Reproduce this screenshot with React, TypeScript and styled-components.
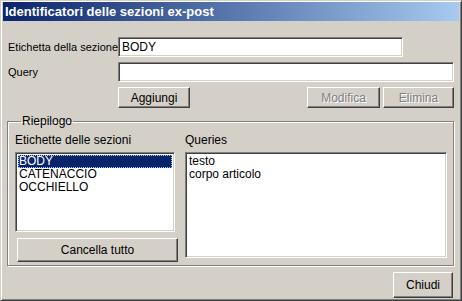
import styled, { createGlobalStyle } from 'styled-components';

const GlobalStyle = createGlobalStyle`
  html, body {
    margin: 0;
    padding: 0;
    background: #d4d0c8;
  }
  body {
    font-family: "Liberation Sans", Arial, sans-serif;
    font-size: 11px;
    color: #000;
  }
`;

const sezioni = ['BODY', 'CATENACCIO', 'OCCHIELLO'];
const queries = ['testo', 'corpo articolo'];

export default function App() {
  return (
    <>
      <GlobalStyle />
      <Window>
        <TitleBar>Identificatori delle sezioni ex-post</TitleBar>
        <Body>
          <FieldRow>
            <FieldLabel>Etichetta della sezione</FieldLabel>
            <TextField $width={285} defaultValue="BODY" />
          </FieldRow>
          <FieldRow>
            <FieldLabel>Query</FieldLabel>
            <TextField $width={336} defaultValue="" />
          </FieldRow>
          <ButtonRow>
            <Button $width={72}>Aggiungi</Button>
            <Spacer />
            <Button $width={73} disabled>
              Modifica
            </Button>
            <Button $width={71} disabled>
              Elimina
            </Button>
          </ButtonRow>
          <GroupBox>
            <Legend>Riepilogo</Legend>
            <GroupColumns>
              <Column $width={163}>
                <ColumnLabel>Etichette delle sezioni</ColumnLabel>
                <ListBox $height={80} $width={160}>
                  {sezioni.map((s, i) => (
                    <ListItem key={s} $selected={i === 0}>
                      {s}
                    </ListItem>
                  ))}
                </ListBox>
                <WideButton $width={161} $height={24}>
                  Cancella tutto
                </WideButton>
              </Column>
              <Column>
                <ColumnLabel>Queries</ColumnLabel>
                <ListBox $height={106}>
                  {queries.map((q) => (
                    <ListItem key={q}>{q}</ListItem>
                  ))}
                </ListBox>
              </Column>
            </GroupColumns>
          </GroupBox>
          <Footer>
            <Button $width={60} $height={26}>
              Chiudi
            </Button>
          </Footer>
        </Body>
      </Window>
    </>
  );
}

const Window = styled.div`
  box-sizing: border-box;
  width: 462px;
  height: 301px;
  padding: 1px 2px 2px 2px;
  border: 1px solid;
  border-color: #d4d0c8 #404040 #404040 #d4d0c8;
  box-shadow: inset 1px 1px #fff, inset -1px -1px #808080;
  background: #d4d0c8;
  display: flex;
  flex-direction: column;
`;

const TitleBar = styled.div`
  height: 19px;
  line-height: 19px;
  padding-left: 2px;
  color: #fff;
  font-weight: bold;
  font-size: 13px;
  background: linear-gradient(to right, #0a246a, #a6caf0);
  white-space: nowrap;
`;

const Body = styled.div`
  flex: 1;
  display: flex;
  flex-direction: column;
  padding: 16px 5px 0 5px;
`;

const FieldRow = styled.div`
  display: flex;
  align-items: center;
  height: 20px;
  margin-bottom: 5px;
`;

const FieldLabel = styled.span`
  width: 110px;
  white-space: nowrap;
`;

const TextField = styled.input<{ $width: number }>`
  box-sizing: border-box;
  width: ${(p) => p.$width}px;
  height: 20px;
  padding: 0 3px;
  font-family: "Liberation Sans", Arial, sans-serif;
  font-size: 12px;
  background: #fff;
  outline: none;
  border: 1px solid;
  border-color: #808080 #fff #fff #808080;
  box-shadow: inset 1px 1px #404040, inset -1px -1px #d4d0c8;
`;

const ButtonRow = styled.div`
  display: flex;
  padding-left: 110px;
  gap: 3px;
`;

const Spacer = styled.div`
  flex: 1;
`;

const Button = styled.button<{ $width: number; $height?: number }>`
  box-sizing: border-box;
  width: ${(p) => p.$width}px;
  height: ${(p) => p.$height ?? 21}px;
  padding: 0;
  font-family: "Liberation Sans", Arial, sans-serif;
  font-size: 12px;
  color: #000;
  background: #d4d0c8;
  border: 1px solid;
  border-color: #fff #404040 #404040 #fff;
  box-shadow: inset -1px -1px #808080;

  &:disabled {
    color: #808080;
    text-shadow: 1px 1px #fff;
  }
`;

const WideButton = styled(Button)`
  margin-left: 2px;
`;

const GroupBox = styled.fieldset`
  box-sizing: border-box;
  margin: 7px 0 0 -1px;
  padding: 0 6px 0 7px;
  height: 151px;
  border: 1px solid #808080;
  box-shadow: inset 1px 1px #fff, 1px 1px #fff;
  min-width: 0;
`;

const Legend = styled.legend`
  padding: 0 1px;
  margin-left: 6px;
  font-size: 12px;
  line-height: 12px;
`;

const GroupColumns = styled.div`
  display: flex;
  gap: 7px;
  padding-top: 6px;
`;

const Column = styled.div<{ $width?: number }>`
  display: flex;
  flex-direction: column;
  width: ${(p) => (p.$width ? `${p.$width}px` : 'auto')};
  flex: ${(p) => (p.$width ? 'none' : 1)};
`;

const ColumnLabel = styled.div`
  font-size: 12px;
  height: 14px;
  margin-bottom: 5px;
`;

const ListBox = styled.div<{ $height: number; $width?: number }>`
  box-sizing: border-box;
  width: ${(p) => (p.$width ? `${p.$width}px` : 'auto')};
  height: ${(p) => p.$height}px;
  padding: 2px;
  margin-bottom: 6px;
  background: #fff;
  border: 1px solid;
  border-color: #808080 #fff #fff #808080;
  box-shadow: inset 1px 1px #404040, inset -1px -1px #d4d0c8;
`;

const ListItem = styled.div<{ $selected?: boolean }>`
  height: 13px;
  line-height: 13px;
  padding-left: 1px;
  font-size: 12px;
  color: ${(p) => (p.$selected ? '#fff' : '#000')};
  background: ${(p) => (p.$selected ? '#0a246a' : 'transparent')};
  outline: ${(p) => (p.$selected ? '1px dotted #a6caf0' : 'none')};
  outline-offset: -1px;
`;

const Footer = styled.div`
  display: flex;
  justify-content: flex-end;
  padding-top: 6px;
  padding-right: 1px;
`;
